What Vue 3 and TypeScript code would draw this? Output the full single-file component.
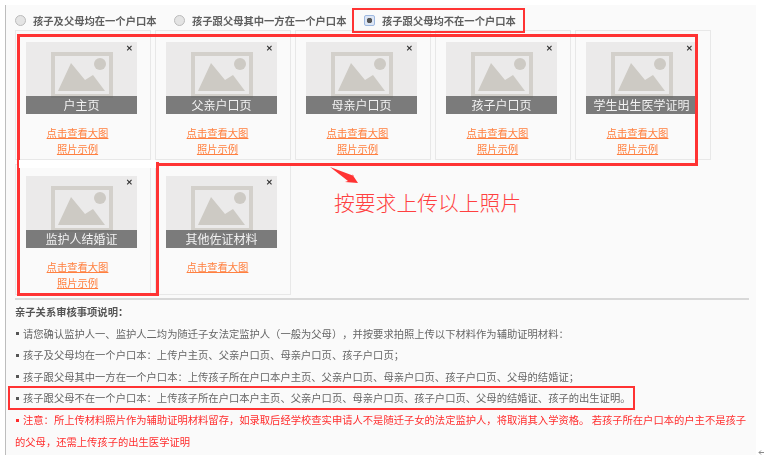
<script setup lang="ts">
interface Card { title: string; example: boolean; close: boolean }
const cards: Card[] = [
  { title: '户主页', example: true, close: true },
  { title: '父亲户口页', example: true, close: true },
  { title: '母亲户口页', example: true, close: true },
  { title: '孩子户口页', example: true, close: true },
  { title: '学生出生医学证明', example: true, close: true },
  { title: '监护人结婚证', example: true, close: true },
  { title: '其他佐证材料', example: false, close: true },
]
const radios = [
  { label: '孩子及父母均在一个户口本', on: false },
  { label: '孩子跟父母其中一方在一个户口本', on: false },
  { label: '孩子跟父母均不在一个户口本', on: true },
]
const notes = [
  '请您确认监护人一、监护人二均为随迁子女法定监护人（一般为父母），并按要求拍照上传以下材料作为辅助证明材料：',
  '孩子及父母均在一个户口本：上传户主页、父亲户口页、母亲户口页、孩子户口页；',
  '孩子跟父母其中一方在一个户口本：上传孩子所在户口本户主页、父亲户口页、母亲户口页、孩子户口页、父母的结婚证；',
  '孩子跟父母不在一个户口本：上传孩子所在户口本户主页、父亲户口页、母亲户口页、孩子户口页、父母的结婚证、孩子的出生证明。',
]
</script>

<template>
  <div class="page">
    <div class="panel">
      <div class="radios">
        <label v-for="r in radios" :key="r.label" class="radio">
          <span class="dot" :class="{ on: r.on }"></span>{{ r.label }}
        </label>
      </div>

      <div class="grid">
        <div v-for="c in cards" :key="c.title" class="card">
          <div class="thumb">
            <svg class="ph" width="111" height="71" viewBox="0 0 111 71">
              <rect x="27" y="12" width="58" height="42" fill="none" stroke="#d3d0cb" stroke-width="4" />
              <polygon points="32,49 45,21 59,38 67,33 79,49" fill="#cdcac4" />
              <circle cx="74" cy="22" r="6" fill="#cdcac4" />
            </svg>
            <span class="close">✕</span>
            <div class="caption">{{ c.title }}</div>
          </div>
          <div class="links">
            <a>点击查看大图</a>
            <a v-if="c.example">照片示例</a>
          </div>
        </div>
      </div>

      <div class="notes">
        <h4>亲子关系审核事项说明：</h4>
        <p v-for="n in notes" :key="n"><i></i>{{ n }}</p>
        <p class="warn"><i></i>注意：所上传材料照片作为辅助证明材料留存，如录取后经学校查实申请人不是随迁子女的法定监护人，将取消其入学资格。 若孩子所在户口本的户主不是孩子的父母，还需上传孩子的出生医学证明</p>
      </div>
    </div>

    <div class="mark m-radio"></div>
    <div class="mark m-row1"></div>
    <div class="mark m-row2"></div>
    <div class="patch"></div>
    <div class="mark m-note"></div>
    <svg class="arrow" width="32" height="20" viewBox="0 0 32 20">
      <polygon points="0,0 24,9 22,7 28,16 15,15 18,14" fill="#ff3333" />
    </svg>
    <div class="hint">按要求上传以上照片</div>
    <svg class="corner" width="6" height="5" viewBox="0 0 6 5">
      <path d="M6 2.5H1M3 .5 1 2.5l2 2" fill="none" stroke="#8a8a8a" />
    </svg>
  </div>
</template>

<style>
html, body { margin: 0; background: #fff; }
</style>

<style scoped>
.page {
  position: relative;
  width: 764px;
  height: 455px;
  overflow: hidden;
  background: #fff;
  font-family: "Noto Sans CJK SC", "Liberation Sans", sans-serif;
  font-size: 10.3px;
  text-spacing-trim: space-all;
}
.panel {
  width: 751px;
  height: 450px;
  margin: 5px 0 0 5px;
  border-left: 1px solid #bdbdbd;
  background: #fafafa;
  padding-left: 9px;
  box-sizing: border-box;
  filter: blur(0.4px);
}
.radios {
  display: flex;
  height: 25px;
  align-items: center;
  padding-top: 5px;
  box-sizing: border-box;
}
.radio {
  display: flex;
  align-items: center;
  color: #5f5f5f;
  font-weight: 700;
  white-space: nowrap;
}
.radio:nth-child(1) { width: 159px; }
.radio:nth-child(2) { width: 190px; }
.dot {
  width: 9px;
  height: 9px;
  margin-right: 7px;
  border: 1px solid #bbb;
  border-radius: 50%;
  background: #e4e4e4;
}
.dot.on {
  border-radius: 2px;
  border-color: #9db8e0;
  background: radial-gradient(circle, #555 0 2.5px, #dde6f5 3px);
}
.grid {
  display: grid;
  grid-template-columns: repeat(5, 136px);
  grid-template-rows: 130px 131px;
  gap: 4px;
}
.card {
  border: 1px solid #e8e8e8;
  padding: 11px 13px 0 10px;
  box-sizing: border-box;
}
.thumb {
  position: relative;
  width: 111px;
  height: 72px;
  background: #ebeaea;
}
.ph { display: block; }
.close {
  position: absolute;
  top: 0;
  right: 4px;
  color: #333;
  font-size: 8px;
  font-weight: 700;
  line-height: 11px;
}
.caption {
  position: absolute;
  left: 0;
  right: 0;
  bottom: 0;
  height: 18px;
  background: rgba(95, 95, 95, 0.8);
  color: #f2f2f2;
  font-size: 12px;
  line-height: 18px;
  text-align: center;
  white-space: nowrap;
}
.links {
  width: 103px;
  margin-top: 11px;
  display: flex;
  flex-direction: column;
  align-items: center;
  line-height: 16px;
}
.links a {
  color: #ff8040;
  text-decoration: underline;
}
.notes {
  width: 734px;
  margin-top: 3px;
  border-top: 2px solid #d8d8d8;
  padding-top: 1px;
  color: #666;
  line-height: 21.6px;
}
.notes h4 {
  margin: 0;
  font-size: 10.3px;
  font-weight: 700;
  color: #555;
}
.notes p { margin: 0; }
.notes i {
  display: inline-block;
  width: 3px;
  height: 3px;
  margin: 0 4px 2px 1px;
  background: #555;
  vertical-align: middle;
}
.warn { color: #ff2d2d; }
.warn i { background: #ff2d2d !important; }
.mark {
  position: absolute;
  border: 3px solid #ff3333;
  box-sizing: border-box;
}
.m-radio { left: 352px; top: 8px; width: 173px; height: 25px; border-width: 2px; }
.m-row1 { left: 17px; top: 34px; width: 681px; height: 132px; }
.m-row2 { left: 17px; top: 162px; width: 142px; height: 134px; }
.m-note { left: 8px; top: 386px; width: 627px; height: 24px; border-width: 2px; }
.patch {
  position: absolute;
  left: 19px;
  top: 160px;
  width: 137px;
  height: 8px;
  background: #fff;
}
.arrow { position: absolute; left: 330px; top: 167px; }
.corner { position: absolute; left: 758px; top: 450px; }
.hint {
  position: absolute;
  left: 334px;
  top: 189px;
  color: #ff4040;
  font-size: 20.8px;
  line-height: 26px;
  font-weight: 300;
  white-space: nowrap;
}
</style>
